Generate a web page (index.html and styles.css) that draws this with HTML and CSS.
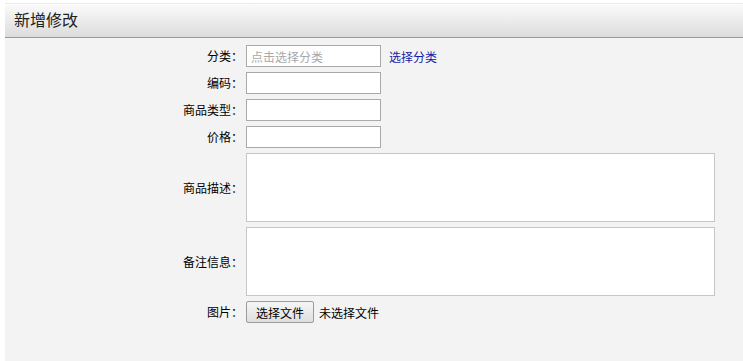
FILE: index.html
```html
<!DOCTYPE html>
<html lang="zh-CN">
<head>
  <meta charset="UTF-8">
  <title>新增修改</title>
  <link rel="stylesheet" href="styles.css">
</head>
<body>
  <div class="panel">
    <div class="panel-header">新增修改</div>
    <form class="edit-form">
      <div class="form-row">
        <label class="form-label">分类：</label>
        <input type="text" class="input-text" placeholder="点击选择分类" readonly>
        <a href="#" class="pick-link">选择分类</a>
      </div>
      <div class="form-row">
        <label class="form-label">编码：</label>
        <input type="text" class="input-text">
      </div>
      <div class="form-row">
        <label class="form-label">商品类型：</label>
        <input type="text" class="input-text">
      </div>
      <div class="form-row">
        <label class="form-label">价格：</label>
        <input type="text" class="input-text">
      </div>
      <div class="form-row">
        <label class="form-label">商品描述：</label>
        <textarea class="input-area"></textarea>
      </div>
      <div class="form-row">
        <label class="form-label">备注信息：</label>
        <textarea class="input-area"></textarea>
      </div>
      <div class="form-row">
        <label class="form-label">图片：</label>
        <button type="button" class="file-button">选择文件</button>
        <span class="file-name">未选择文件</span>
      </div>
    </form>
  </div>
</body>
</html>
```

FILE: styles.css
```css
body {
  margin: 0;
  background: #ffffff;
  font-family: "Noto Sans CJK SC", "DejaVu Sans", sans-serif;
  font-size: 12px;
  color: #000;
}

.panel {
  margin: 3px 0 0 5px;
  border-top: 1px solid #ececec;
  background: #f3f3f3;
  min-height: calc(100vh - 4px);
}

.panel-header {
  height: 33px;
  line-height: 31px;
  padding-left: 9px;
  font-size: 16px;
  color: #222;
  background: linear-gradient(to bottom, #fbfbfb, #dcdcdc);
  border-bottom: 1px solid #9a9a9a;
}

.edit-form {
  padding-top: 7px;
}

.form-row {
  display: flex;
  align-items: center;
  margin-bottom: 5px;
}

.form-label {
  width: 238px;
  padding-right: 3px;
  text-align: right;
  line-height: 16px;
}

.input-text {
  box-sizing: border-box;
  width: 135px;
  height: 22px;
  margin: 0;
  padding: 0 4px;
  border: 1px solid #a9a9a9;
  background: #fff;
  font-family: inherit;
  font-size: 12px;
  outline: none;
}

.input-text::placeholder {
  color: #a8a8a8;
}

.pick-link {
  margin-left: 8px;
  color: #1a1aa6;
  text-decoration: none;
}

.input-area {
  box-sizing: border-box;
  width: 469px;
  height: 69px;
  margin: 0;
  border: 1px solid #c6c6c6;
  background: #fff;
  resize: none;
  outline: none;
}

.file-button {
  box-sizing: border-box;
  width: 68px;
  height: 22px;
  margin: 0;
  padding: 0;
  border: 1px solid #9c9c9c;
  border-radius: 2px;
  background: linear-gradient(to bottom, #f6f6f6, #dedede);
  font-family: inherit;
  font-size: 12px;
  color: #000;
}

.file-name {
  margin-left: 5px;
}
```
